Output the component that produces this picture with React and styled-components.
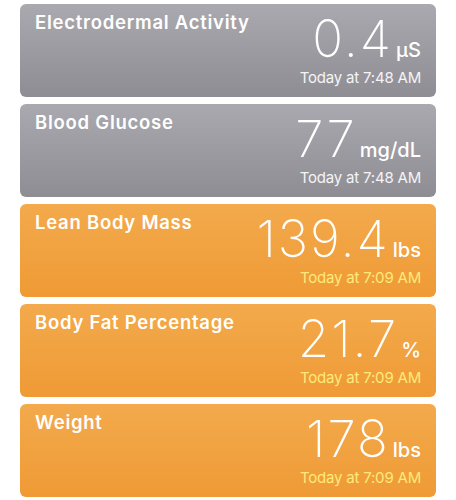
import React from "react";
import styled, { createGlobalStyle, css } from "styled-components";

const Global = createGlobalStyle`
  html, body { margin: 0; padding: 0; background: #ffffff; }
  body { font-family: Inter, "Liberation Sans", sans-serif; -webkit-font-smoothing: antialiased; }
`;

const List = styled.div`
  display: flex;
  flex-direction: column;
  gap: 7px;
  width: 416px;
  padding: 4px 0 0 20px;
`;

const Card = styled.div`
  display: flex;
  justify-content: space-between;
  align-items: flex-start;
  height: 93px;
  box-sizing: border-box;
  padding: 7px 15px 0 15px;
  border-radius: 6px;
  color: #ffffff;
  ${(p) =>
    p.$tone === "gray"
      ? css`background: linear-gradient(180deg, #aaa9af 0%, #8e8d93 100%);`
      : css`background: linear-gradient(180deg, #f3aa4c 0%, #ef9a35 100%);`}
`;

const Title = styled.div`
  font-size: 18.5px;
  line-height: 22px;
  font-weight: 600;
  letter-spacing: 0.75px;
`;

const Side = styled.div`
  display: flex;
  flex-direction: column;
  align-items: flex-end;
  padding-top: 2px;
`;

const ValueLine = styled.div`
  display: flex;
  align-items: baseline;
  gap: 3px;
`;

const Value = styled.span`
  font-size: 51px;
  line-height: 51px;
  font-weight: 200;
  letter-spacing: 2px;
`;

const Unit = styled.span`
  font-size: 20px;
  font-weight: 500;
`;

const DateText = styled.div`
  margin-top: 5px;
  font-size: 15px;
  line-height: 18px;
  font-weight: 400;
  letter-spacing: -0.2px;
  color: ${(p) => (p.$tone === "gray" ? "#f4f4f6" : "#fdea7a")};
`;

const rows = [
  { title: "Electrodermal Activity", value: "0.4", unit: "µS", date: "Today at 7:48 AM", tone: "gray" },
  { title: "Blood Glucose", value: "77", unit: "mg/dL", date: "Today at 7:48 AM", tone: "gray" },
  { title: "Lean Body Mass", value: "139.4", unit: "lbs", date: "Today at 7:09 AM", tone: "orange" },
  { title: "Body Fat Percentage", value: "21.7", unit: "%", date: "Today at 7:09 AM", tone: "orange" },
  { title: "Weight", value: "178", unit: "lbs", date: "Today at 7:09 AM", tone: "orange" },
];

export default function App() {
  return (
    <>
      <Global />
      <List>
        {rows.map((r) => (
          <Card key={r.title} $tone={r.tone}>
            <Title>{r.title}</Title>
            <Side>
              <ValueLine>
                <Value>{r.value}</Value>
                <Unit>{r.unit}</Unit>
              </ValueLine>
              <DateText $tone={r.tone}>{r.date}</DateText>
            </Side>
          </Card>
        ))}
      </List>
    </>
  );
}
